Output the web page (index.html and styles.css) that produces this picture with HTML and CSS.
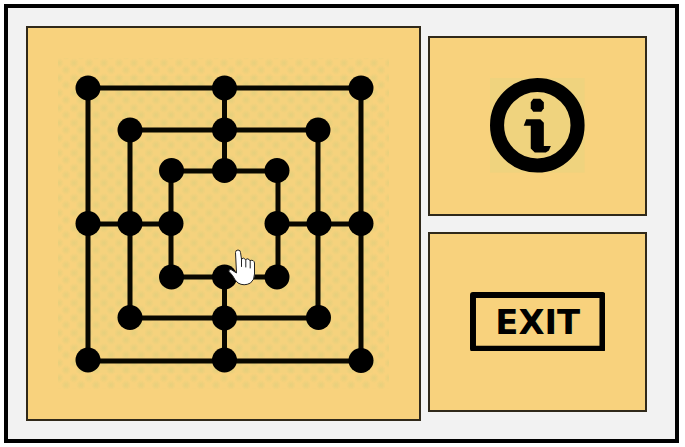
FILE: index.html
```html
<!DOCTYPE html>
<html lang="en">
<head>
<meta charset="utf-8">
<title>Nine Men's Morris</title>
<link rel="stylesheet" href="styles.css">
</head>
<body>
<main class="window">
  <section class="board">
    <svg class="board-art" viewBox="28 28 391 391" aria-hidden="true">
      <defs>
        <radialGradient id="speck">
          <stop offset="0" stop-color="#dfcf7c" stop-opacity=".75"/>
          <stop offset="1" stop-color="#dfcf7c" stop-opacity="0"/>
        </radialGradient>
        <pattern id="specks" x="55" y="55" width="15" height="15" patternUnits="userSpaceOnUse">
          <circle cx="4" cy="8" r="5" fill="url(#speck)"/>
          <circle cx="11" cy="15" r="5" fill="url(#speck)"/>
          <circle cx="11" cy="0" r="5" fill="url(#speck)"/>
        </pattern>
      </defs>
      <rect x="76" y="76" width="297" height="297" fill="#efd27d" opacity=".4"/>
      <rect x="58" y="58" width="331" height="331" fill="url(#specks)"/>
      <g class="lines">
        <rect x="88" y="88" width="273" height="273"/>
        <rect x="130" y="130" width="188" height="188"/>
        <rect x="171" y="171" width="107" height="106"/>
        <path d="M224.500 88V171M224.500 277V360M88 224H171M278 224H361"/>
      </g>
      <g class="points">
        <circle cx="88" cy="88" r="12.500"/><circle cx="224.500" cy="88" r="12.500"/><circle cx="361" cy="88" r="12.500"/>
        <circle cx="130" cy="130" r="12.500"/><circle cx="224.500" cy="130" r="12.500"/><circle cx="318" cy="130" r="12.500"/>
        <circle cx="171.500" cy="170.500" r="12.500"/><circle cx="224.500" cy="170.500" r="12.500"/><circle cx="277" cy="170.500" r="12.500"/>
        <circle cx="88" cy="223.500" r="12.500"/><circle cx="130" cy="223.500" r="12.500"/><circle cx="171" cy="223.500" r="12.500"/>
        <circle cx="277" cy="223.500" r="12.500"/><circle cx="319" cy="223.500" r="12.500"/><circle cx="361" cy="223.500" r="12.500"/>
        <circle cx="171.500" cy="277" r="12.500"/><circle cx="224.500" cy="277" r="12.500"/><circle cx="277" cy="277" r="12.500"/>
        <circle cx="130" cy="317.500" r="12.500"/><circle cx="224.500" cy="318" r="12.500"/><circle cx="318.500" cy="317.500" r="12.500"/>
        <circle cx="88" cy="360" r="12.500"/><circle cx="224.500" cy="360" r="12.500"/><circle cx="361" cy="360.500" r="12.500"/>
      </g>
      <path class="hand" d="M235.500 252.500Q235.500 250 238 250Q240.500 250 240.500 252.500L241.500 259Q243.500 257 245.500 259.500Q248 257.500 250 260.500Q254 259.500 254.500 263V274Q254.500 280 250.500 283Q244 286.500 238 283Q235 280.500 232.500 275.500L229 271.500Q228.500 269 231 269.500L236.500 273Z"/>
      <path class="fingers" d="M241.500 259V266.500M245.800 260V267M250.200 261V268"/>
    </svg>
  </section>
  <nav class="side">
    <button class="card" type="button" aria-label="Information">
      <svg class="info-icon" viewBox="0 0 94 94" aria-hidden="true">
        <rect width="94" height="94" fill="#ead47f" opacity=".65"/>
        <circle cx="47" cy="47" r="40" fill="none" stroke="#000" stroke-width="14"/>
        <path d="M43 20.500H50L53.500 24V30L51 33.500H43L40.500 30V24Z"/>
        <path d="M36 41H50L53.500 44.500V67.500H60.500L58.500 72L55.500 74H44.500L40.500 70V47.500H33.500Z"/>
      </svg>
    </button>
    <button class="card" type="button">
      <svg class="exit-sign" viewBox="0 0 136 60">
        <rect x="3" y="3" width="130" height="54"/>
        <text x="68" y="42">EXIT</text>
      </svg>
    </button>
  </nav>
</main>
</body>
</html>
```
FILE: styles.css
```css
* {
  box-sizing: border-box;
}

body {
  margin: 0;
  padding: 4px 6px 4px 4px;
  background: #fff;
  font-family: "DejaVu Sans", sans-serif;
}

.window {
  display: grid;
  grid-template-columns: 395fr 219fr;
  gap: 7px;
  align-items: center;
  padding: 18px 28px 18px 18px;
  border: 4px solid #000;
  background: #f2f2f2;
}

.board {
  border: 2px solid #30291a;
  background: #f8d27d;
}

.board-art {
  display: block;
  width: 100%;
}

.lines {
  fill: none;
  stroke: #080700;
  stroke-width: 5;
}

.hand {
  fill: #fff;
  stroke: #222;
  stroke-width: 1;
  stroke-linejoin: round;
}

.fingers {
  fill: none;
  stroke: #222;
  stroke-width: 1;
  stroke-linecap: round;
}

.side {
  display: grid;
  gap: 16px;
}

.card {
  display: flex;
  align-items: center;
  justify-content: center;
  width: 100%;
  aspect-ratio: 219 / 180;
  padding: 0;
  border: 2px solid #30291a;
  border-radius: 0;
  background: #f8d27d;
  cursor: pointer;
}

.info-icon {
  width: 44%;
}

.exit-sign {
  width: 63%;
}

.exit-sign rect {
  fill: none;
  stroke: #000;
  stroke-width: 6;
  stroke-linejoin: round;
}

.exit-sign text {
  fill: #000;
  font-family: "DejaVu Sans", sans-serif;
  font-size: 34px;
  font-weight: 700;
  text-anchor: middle;
}
```
